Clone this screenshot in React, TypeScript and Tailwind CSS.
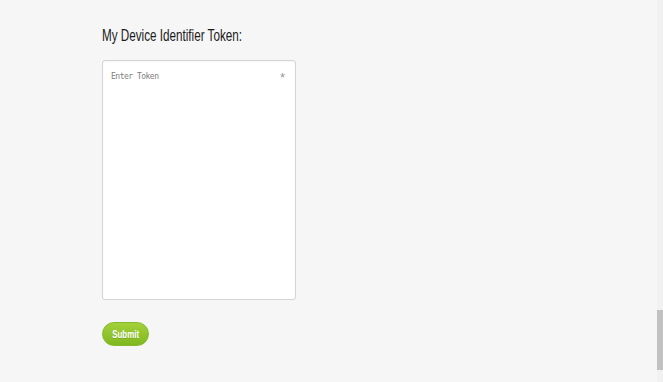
import React, { useState } from 'react';

export default function App() {
  const [token, setToken] = useState('');

  return (
    <div className="flex h-[382px] w-full bg-[#f6f6f6] overflow-hidden">
      <div className="flex-1 pl-[102px] pt-[26px]">
        {/* condensed heading, Arial Narrow look */}
        <h2 className="h-[20px] text-[16px] leading-[20px] text-[#1a1a1a] font-['Liberation_Sans',sans-serif]">
          <span className="inline-block origin-left scale-x-[0.73] whitespace-nowrap">My Device Identifier Token:</span>
        </h2>

        <div className="relative mt-[14px] w-[194px]">
          <textarea
            value={token}
            onChange={e => setToken(e.target.value)}
            placeholder="Enter Token"
            className="block h-[240px] w-full resize-none rounded-[3px] border border-[#d4d4d4] bg-white px-[8px] py-[10px] font-['DejaVu_Sans_Mono',monospace] text-[8px] tracking-[-0.5px] text-[#555] placeholder:text-[#808080] shadow-[inset_0_1px_2px_rgba(0,0,0,0.04)] outline-none"
          />
          {/* required marker */}
          <span className="absolute right-[11px] top-[8px] text-[13px] text-[#999] font-['Liberation_Sans',sans-serif]">*</span>
        </div>

        <button
          type="submit"
          className="mt-[22px] flex h-[24px] w-[47px] items-center justify-center rounded-full border border-[#86b92a] bg-gradient-to-b from-[#a3d13a] to-[#7fb81f] text-[11px] font-bold text-white font-['Liberation_Sans',sans-serif] [text-shadow:0_1px_0_rgba(0,0,0,0.15)]"
        >
          <span className="inline-block scale-x-[0.72]">Submit</span>
        </button>
      </div>

      {/* fake scrollbar */}
      <div className="flex w-[6px] flex-col bg-[#f1f1f1]">
        <div className="h-[310px]" />
        <div className="h-[60px] bg-[#c1c1c1]" />
        <div className="flex-1" />
      </div>
    </div>
  );
}
